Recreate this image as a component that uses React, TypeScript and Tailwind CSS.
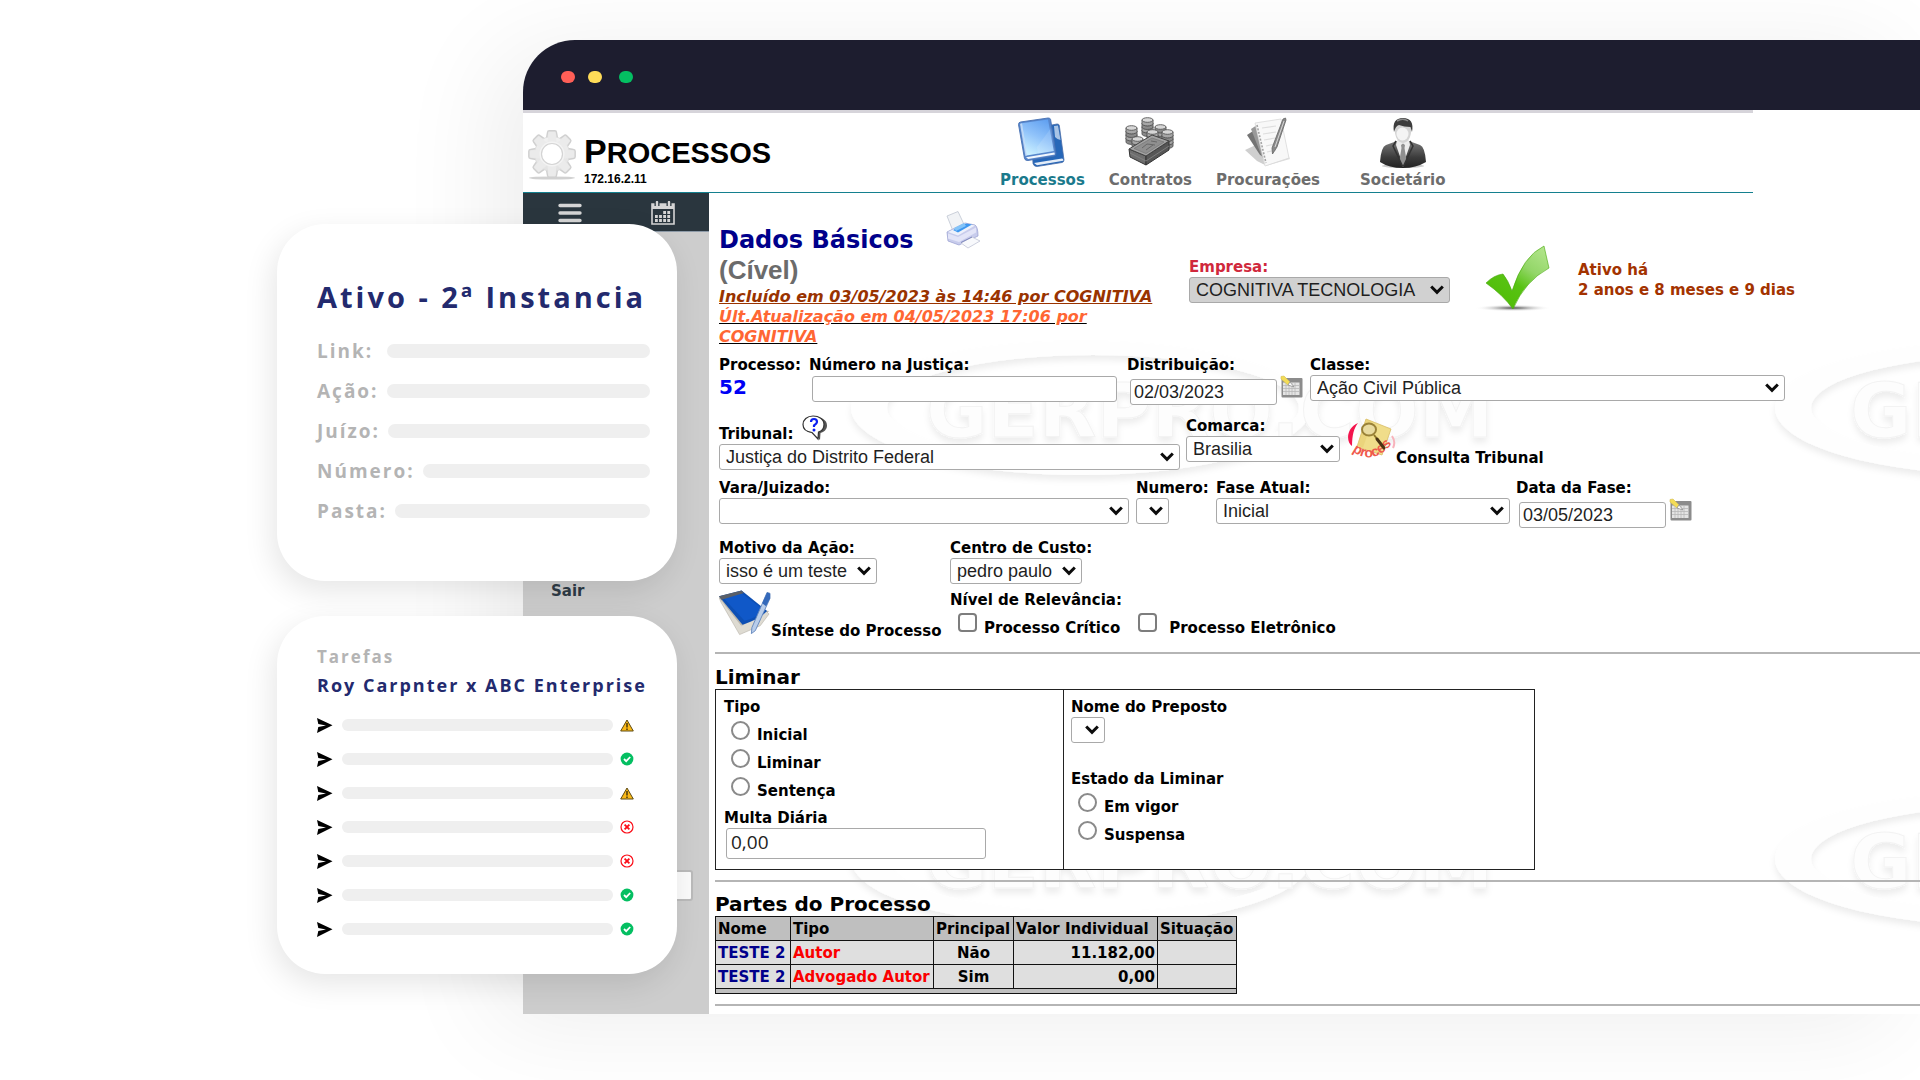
import type { ReactNode } from "react";
import clsx from "clsx";

const LABEL = "text-[15px] leading-5 font-bold whitespace-nowrap";
const FIELD =
  "h-[26px] rounded-[3px] border border-[#a9a9a9] bg-white font-['Liberation_Sans',Arial,sans-serif] text-[18px] leading-6 text-[#1f1f1f]";

const SUMMARY = ["Link:", "Ação:", "Juízo:", "Número:", "Pasta:"];

type Status = "warning" | "done" | "failed";
const TASKS: Status[] = ["warning", "done", "warning", "failed", "failed", "done", "done"];

const PARTIES = [
  { name: "TESTE 2", type: "Autor", main: "Não", value: "11.182,00" },
  { name: "TESTE 2", type: "Advogado Autor", main: "Sim", value: "0,00" },
];

function SelectBox({
  id,
  label,
  value = "",
  width,
  muted = false,
}: {
  id: string;
  label?: string;
  value?: string;
  width: string;
  muted?: boolean;
}) {
  return (
    <div className={clsx("relative", width)}>
      <select
        id={id}
        aria-label={label}
        defaultValue={value}
        className={clsx(FIELD, "block w-full appearance-none pl-[6px]", muted && "bg-[#d1d1d1]!")}
      >
        <option value={value}>{value}</option>
      </select>
      <svg
        className="pointer-events-none absolute top-[8px] right-[6px]"
        width="14"
        height="10"
        viewBox="0 0 14 10"
        fill="none"
        stroke="#0c0c0c"
        strokeWidth="3"
      >
        <path d="M1.200 1.500 7 7.300l5.800-5.800" />
      </svg>
    </div>
  );
}

function Field({ id, label, children, className }: { id: string; label: string; children: ReactNode; className?: string }) {
  return (
    <div className={className}>
      <label htmlFor={id} className={clsx(LABEL, "block")}>
        {label}
      </label>
      {children}
    </div>
  );
}

function DateBox({ id, value }: { id: string; value: string }) {
  return (
    <div className="flex items-start gap-[3px]">
      <input id={id} defaultValue={value} className={clsx(FIELD, "mt-1 ml-[3px] w-[147px] px-[3px]")} />
      <button type="button" aria-label="Abrir calendário">
        <DatePickerIcon />
      </button>
    </div>
  );
}

function Radio({ name, label }: { name: string; label: string }) {
  return (
    <label className={clsx(LABEL, "flex h-[28px] items-start gap-[7px]")}>
      <input
        type="radio"
        name={name}
        className="size-[19px] appearance-none rounded-full border-2 border-[#8a8a8a] bg-white checked:bg-[#1a73e8]"
      />
      <span className="pt-1">{label}</span>
    </label>
  );
}

function Check({ label, className }: { label: string; className: string }) {
  return (
    <label className={clsx(LABEL, "flex items-start", className)}>
      <input
        type="checkbox"
        className="size-[19px] appearance-none rounded-[4px] border-2 border-[#7d7d7d] bg-white checked:bg-[#1a73e8]"
      />
      <span className="pt-[5px]">{label}</span>
    </label>
  );
}

/* ---------- icons ---------- */

function GearIcon() {
  const teeth = [0, 45, 90, 135, 180, 225, 270, 315];
  return (
    <svg width="50" height="50" viewBox="0 0 50 50">
      <defs>
        <linearGradient id="gear" x1="0" y1="0" x2="0" y2="1">
          <stop offset="0" stopColor="#f1f1f1" />
          <stop offset="1" stopColor="#e2e2e2" />
        </linearGradient>
      </defs>
      <ellipse cx="25" cy="48" rx="23" ry="1.600" fill="#bdbdbd" opacity=".7" />
      <g fill="#e6e6e6" stroke="#d0d0d0" strokeWidth="1.400" strokeLinejoin="round">
        {teeth.map((a) => (
          <path key={a} d="M19 11 20.500 2.500Q20.600 .8 22.200 .8H27.800Q29.400 .8 29.500 2.500L31 11Z" transform={`rotate(${a} 25 24)`} />
        ))}
      </g>
      <circle cx="25" cy="24" r="17.500" fill="url(#gear)" stroke="#dadada" strokeWidth=".8" />
      <g fill="#ebebeb">
        {teeth.map((a) => (
          <path key={a} d="M20.500 13 21.500 3Q21.600 2 22.500 2H27.500Q28.400 2 28.500 3L29.500 13Z" transform={`rotate(${a} 25 24)`} />
        ))}
      </g>
      <circle cx="25" cy="24" r="12.500" fill="#f4f4f4" />
      <circle cx="25" cy="24" r="10.500" fill="#fff" stroke="#d4d4d4" strokeWidth="1.200" />
    </svg>
  );
}

function BooksIcon() {
  return (
    <svg width="50" height="50" viewBox="0 0 50 50">
      <defs>
        <linearGradient id="bookFront" x1=".8" y1="0" x2=".35" y2="1">
          <stop offset="0" stopColor="#5f9ff0" />
          <stop offset=".5" stopColor="#8fc2fa" />
          <stop offset="1" stopColor="#c9efff" />
        </linearGradient>
      </defs>
      <path d="M14 12 40 7q2-.2 2.300 1.500L47 43q0 2-2 2.500L20 49.500q-3 .2-4-3Z" fill="#2667b8" stroke="#4a6da8" strokeWidth=".8" />
      <path d="M37 9 41 8.500 43.500 23 40.500 22 38 20Z" fill="#a8c4e6" />
      <path d="M17 46 45 41.500l1 .5.3 1.800L20 48.200Z" fill="#e4edf8" />
      <path d="M1.500 7.500Q1.500 5.300 3.500 5L31 1q2.200-.2 2.600 1.500L39 36.500q.2 2-1.800 2.500L11 43.500Q8 44 7.400 41Z" fill="#5686cc" stroke="#4770b2" strokeWidth=".9" />
      <path d="M9 40.300 37.400 35.500l.5 2L11.200 42Z" fill="#f2f7fd" />
      <path d="M4.500 6.300 31 2.400 36.800 34 9.500 38.600Z" fill="url(#bookFront)" />
      <path d="M20 30 34 11 36.800 34 21 36.700Z" fill="#fff" opacity=".12" />
      <path d="M3 6.800 5 6.300l5 32.200-1.600.5Z" fill="#d5e9ff" opacity=".8" />
    </svg>
  );
}

function Coins({ x, y, n }: { x: number; y: number; n: number }) {
  return (
    <g stroke="#565656" strokeWidth=".9">
      {Array.from({ length: n }, (_, i) => (
        <g key={i}>
          <path d={`M${x} ${y + (n - 1 - i) * 3.5}v3.500a5.500 2.400 0 0 0 11 0v-3.500Z`} fill={i % 2 ? "#a6a6a6" : "#8a8a8a"} />
          <ellipse cx={x + 5.5} cy={y + (n - 1 - i) * 3.5} rx="5.500" ry="2.300" fill="#d6d6d6" />
        </g>
      ))}
    </g>
  );
}

function MoneyIcon() {
  return (
    <svg width="50" height="50" viewBox="0 0 50 50">
      <Coins x={17} y={3} n={4} />
      <Coins x={30} y={10} n={3} />
      <Coins x={1} y={11} n={4} />
      <Coins x={22} y={15} n={2} />
      <Coins x={37} y={15} n={4} />
      <Coins x={7} y={22} n={2} />
      <path d="M4 32 21 39 21 48 5 40Z" fill="#6d6d6d" stroke="#333" />
      <path d="M21 39 44 24V33L21 48Z" fill="#565656" stroke="#333" />
      <path d="M4 32 27 18 44 24 21 39Z" fill="#a2a2a2" stroke="#444" strokeLinejoin="round" />
      <path d="M9 31.500 27 21 39 25 21 36.500Z" fill="#8f8f8f" stroke="#757575" strokeWidth=".7" />
      <path d="m17 31 5-4m-1 6 7-5m-6-1 8 1m-4-4 6 1" stroke="#636363" fill="none" strokeWidth=".9" />
      <path d="m5 36 16 8 23-15" stroke="#858585" fill="none" strokeWidth=".8" />
    </svg>
  );
}

function PapersIcon() {
  return (
    <svg width="50" height="50" viewBox="0 0 50 50">
      <path d="M2 33 17 26 24 49 14 44Z" fill="#cfcfcf" />
      <path d="M30 30 42 32 47 42 23 49Z" fill="#dcdcdc" />
      <path d="M4 18 13 12 21 40 17 38Z" fill="#747474" />
      <path d="M8 12 14 8 24 44 19 40Z" fill="#9a9a9a" />
      <path d="M12 6 38 2 46 41 22 49Z" fill="#f8f8f8" stroke="#d9d9d9" strokeWidth=".8" />
      <path d="M19 11 33 9M20 17l13-2M21 23l11-2M23 29l9-2M24 35l9-2" stroke="#dedede" strokeWidth="1.200" />
      <path d="m14 8 9 38" stroke="#a5a5a5" strokeWidth="1.600" strokeDasharray="2 1.500" />
      <path d="m40 2 2.500-1 .5 2-9 27-4.500 7-.5-6Z" fill="#8a8a8a" stroke="#666" strokeWidth=".8" />
      <path d="m41 4-9 26" stroke="#d8d8d8" strokeWidth="1" />
    </svg>
  );
}

function BusinessmanIcon() {
  return (
    <svg width="50" height="52" viewBox="0 0 50 52">
      <defs>
        <linearGradient id="suit" x1="0" y1="0" x2="0" y2="1">
          <stop offset="0" stopColor="#7a7a7a" />
          <stop offset=".6" stopColor="#3c3c3c" />
          <stop offset="1" stopColor="#222" />
        </linearGradient>
      </defs>
      <ellipse cx="25" cy="49" rx="21" ry="2" fill="#aaa" opacity=".6" />
      <path d="M2 45Q3 30 8 28L19 24 25 28 31 24 42 28Q47 30 48 45 38 51 25 51 11 51 2 45Z" fill="url(#suit)" />
      <path d="M19 23h12l1 5-7 20-7-20Z" fill="#ececec" />
      <path d="m23 28 2-1.500 2 1.500-.5 3 2 12-3.500 7-3.500-7 2-12Z" fill="#8f8f8f" />
      <path d="m18 24-3 5 9.500 20M32 24l3 5-9.500 20" fill="none" stroke="#333" strokeWidth="1.500" />
      <path d="M16.500 11Q17 25 25 26 33 25 33.500 11 30 6 25 6T16.500 11Z" fill="#d4d4d4" />
      <ellipse cx="24.500" cy="17" rx="6" ry="6.500" fill="#f4f4f4" />
      <path d="M16 15Q13.500 1 25 1T34 15L32.500 10Q26 10 21 8 17.500 9 16 15Z" fill="#3d3d3d" />
      <path d="M19 4q6-3.500 11 0" stroke="#8a8a8a" fill="none" strokeWidth="1.500" />
    </svg>
  );
}

function PrinterIcon() {
  return (
    <svg width="36" height="38" viewBox="0 0 36 38">
      <path d="m2 5 11-4.500 7 15L8 20Z" fill="#f1f3f6" stroke="#bfc5d2" strokeWidth=".8" />
      <path d="M2 21 20 12 30 14q3 2 3 11L14 34 3 30Z" fill="#c8ccec" stroke="#9ea5d3" strokeWidth=".8" />
      <path d="m3 21 17-8.500 10 2L13 24.500Z" fill="#eef1fb" />
      <path d="m8 19 13-6.500 6 1L13 21.500Z" fill="#3f97ef" />
      <path d="m9 17 10-5 2 3-10 5Z" fill="#83c4f9" />
      <path d="M3 22.500 13 26l18-9.500v5L14 31 3 27.500Z" fill="#e3e5f8" />
      <path d="m16 32 11-6 8 4-12 7Z" fill="#f8f9fc" stroke="#c0c4d6" strokeWidth=".8" />
      <path d="M16 31.500 27 26" stroke="#7d86bd" />
    </svg>
  );
}

function BigCheckIcon() {
  return (
    <svg width="84" height="68" viewBox="0 0 84 68">
      <defs>
        <linearGradient id="tick" x1=".9" y1="0" x2=".2" y2="1">
          <stop offset="0" stopColor="#b3e58c" />
          <stop offset=".35" stopColor="#93d668" />
          <stop offset=".6" stopColor="#58c313" />
          <stop offset="1" stopColor="#4fbb06" />
        </linearGradient>
        <radialGradient id="tickShade">
          <stop offset="0" stopColor="#555" />
          <stop offset=".4" stopColor="#bbb" />
          <stop offset="1" stopColor="#fff" stopOpacity="0" />
        </radialGradient>
      </defs>
      <ellipse cx="39" cy="63" rx="38" ry="3.500" fill="url(#tickShade)" />
      <path d="M12 38Q20 30 29 29 34 35 38 46 49 11 70 1L75 23Q51 36 39 64 29 50 12 38Z" fill="url(#tick)" stroke="#47a80b" strokeWidth=".6" />
    </svg>
  );
}

function HelpIcon() {
  return (
    <svg width="26" height="26" viewBox="0 0 26 26">
      <path d="M11 2C5 2 2 6 2 10.500 2 16 7 18 11 18.500L17 25 17.500 18C21 17 24 14.500 24 10.500 24 5 19 2 11 2Z" fill="#555" transform="translate(1 0)" />
      <path d="M11 1C5 1 1 5 1 9.500 1 15 6 17 10 17.500L16 24 16.500 17C20 16 22 13.500 22 9.500 22 4 17 1 11 1Z" fill="#fff" stroke="#333" strokeWidth="1.200" />
      <path d="M9 7Q9 4 12 4T15 7Q15 8.500 12 10.500V12" fill="none" stroke="#0b1ff0" strokeWidth="2.200" />
      <circle cx="12" cy="15" r="1.500" fill="#0b1ff0" />
    </svg>
  );
}

function DatePickerIcon() {
  return (
    <svg width="24" height="24" viewBox="0 0 24 24">
      <rect x="1.500" y="3" width="21" height="19.500" rx="1" fill="#8c8c8c" />
      <rect x="3" y="7.500" width="16.500" height="12.500" fill="#e4e4e4" />
      <path d="M3 10.500h16.500M3 13.500h16.500M3 16.500h16.500M6 7.500V20M9 7.500V20M12 7.500V20M15 7.500V20" stroke="#b8b8b8" strokeWidth=".8" />
      <path d="M1 1.500 4 1 10 7 8 10 1 4Z" fill="#f3dc57" stroke="#d4bd55" strokeWidth=".6" />
      <path d="m8 10 2-3 4 5Z" fill="#fff" stroke="#888" strokeWidth=".7" />
    </svg>
  );
}

function CourtSearchIcon() {
  return (
    <svg width="49" height="44" viewBox="0 0 49 44">
      <defs>
        <path id="processArc" d="M5 33Q27 50 48 22" />
      </defs>
      <path d="M11 5C-1 10-1 24 5 28 5 17 7 10 11 5Z" fill="#f3144d" />
      <path d="M45 18Q49 24 46 30" fill="none" stroke="#f8b3bb" strokeWidth="2" />
      <path d="m19 1 25 10-9 26-25-8Z" fill="#f0dd8a" stroke="#d8bd64" strokeWidth=".8" />
      <path d="m19 1 6 2.500-9 26-6-2Z" fill="#e6cb6d" opacity=".5" />
      <text fontFamily="Liberation Sans, Arial, sans-serif" fontSize="14" fontWeight="700" fill="#ef5a4c">
        <textPath href="#processArc">proces</textPath>
      </text>
      <ellipse cx="22" cy="11.500" rx="7" ry="6" fill="#e9dba0" stroke="#9a8238" strokeWidth="2" />
      <path d="m27 17 4 5" stroke="#8d7427" strokeWidth="2" />
      <path d="m30 21 7 9" stroke="#4a3414" strokeWidth="3" strokeLinecap="round" />
    </svg>
  );
}

function NotebookIcon() {
  return (
    <svg width="52" height="46" viewBox="0 0 53 46">
      <path d="M0 7 21 36 42 30 51 21 27 18Z" fill="#b9b5ac" />
      <path d="M0 7 2 12 21 45 42 36 51 24 48 21 23 36Z" fill="#dedbd2" stroke="#b5b1a6" strokeWidth=".6" />
      <path d="M0 6 23 0 49 21Q40 30 24 35Z" fill="#0d4fb4" />
      <path d="M4 7 22 2 46 20Q38 28 26 31Z" fill="#1058c8" />
      <path d="M0 6 23 0 25.500 2.500 2.500 9.500Z" fill="#5a5f68" />
      <path d="m49 2 3 1v5L37 41l-4 3 .5-6Z" fill="#b8cdea" stroke="#5f83bb" strokeWidth=".9" />
      <path d="m49 2 3 1v5l-4 8-4-3Z" fill="#3469ba" />
    </svg>
  );
}

function MenuIcon() {
  return (
    <svg width="24" height="20" viewBox="0 0 24 20" stroke="#d5d5d5" strokeWidth="3.400" strokeLinecap="round">
      <path d="M2 2.500h20M2 10h20M2 17.500h20" />
    </svg>
  );
}

function CalendarIcon() {
  return (
    <svg width="24" height="24" viewBox="0 0 24 24">
      <path d="M1 3h22v20H1Z" fill="none" stroke="#d5d5d5" strokeWidth="1.600" />
      <path d="M1 3h22v5H1Z" fill="#d5d5d5" />
      <path d="M6 1v4M18 1v4" stroke="#2a363e" strokeWidth="5" />
      <path d="M6 1v4M18 1v4" stroke="#d5d5d5" strokeWidth="2.400" strokeLinecap="round" />
      <path d="M12.200 11.500h7.500M4 15.500h16M4 19.500h16" stroke="#d5d5d5" strokeWidth="2.800" strokeDasharray="2.800 1.300" />
    </svg>
  );
}

function ArrowIcon() {
  return (
    <svg width="16" height="15" viewBox="0 0 16 15">
      <path d="M0 0 15.500 7.300 0 15 1.300 9 9 7.400 1.300 6Z" />
    </svg>
  );
}

function StatusIcon({ status }: { status: Status }) {
  if (status === "warning") {
    return (
      <svg width="14" height="13" viewBox="0 0 14 13">
        <path d="M7 1 13.300 12H.7Z" fill="#fbb917" stroke="#5d4a12" strokeWidth="1" strokeLinejoin="round" />
        <path d="M7 4v4.600M7 9.600V11" stroke="#3c2f0a" strokeWidth="1.400" />
      </svg>
    );
  }
  if (status === "done") {
    return (
      <svg width="14" height="14" viewBox="0 0 14 14">
        <circle cx="7" cy="7" r="6.400" fill="#04bf62" />
        <path d="m4 7 2.200 2.200L10.200 5" fill="none" stroke="#fff" strokeWidth="1.800" />
      </svg>
    );
  }
  return (
    <svg width="14" height="14" viewBox="0 0 14 14" fill="none" stroke="#fb0d18">
      <circle cx="7" cy="7" r="6" strokeWidth="1.200" />
      <path d="m4.600 4.600 4.800 4.800m0-4.800L4.600 9.400" strokeWidth="1.800" />
    </svg>
  );
}

/* embossed logo tiled behind the form */
function Watermark() {
  const tiles = [
    [0, 0],
    [924, 0],
    [0, 451],
    [924, 451],
  ];
  return (
    <svg className="pointer-events-none absolute inset-0 size-full" aria-hidden="true">
      <defs>
        <filter id="emboss" x="-10%" y="-20%" width="120%" height="150%">
          <feDropShadow dx="0" dy="5" stdDeviation="3" floodColor="#000" floodOpacity=".07" />
        </filter>
      </defs>
      {tiles.map(([x, y]) => (
        <g key={`${x}-${y}`} transform={`translate(${x} ${y})`} filter="url(#emboss)">
          <path
            fillRule="evenodd"
            fill="#fefefe"
            d="M142 215a230 67 0 1 0 460 0a230 67 0 1 0-460 0ZM178 215a206 53 0 1 0 412 0a206 53 0 1 0-412 0Z"
          />
          <text x="217" y="244" fontFamily="DejaVu Sans, sans-serif" fontWeight="700" fontSize="75" fill="#fdfdfd" stroke="#f3f3f3">
            GERPRO.COM
          </text>
        </g>
      ))}
    </svg>
  );
}

/* ---------- sections ---------- */

function Toolbar() {
  const tab = "flex flex-col items-center text-[15px] leading-5 font-bold text-[#6d6d6d]";
  return (
    <header className="flex h-[83px] max-w-[1230px] border-t-[3px] border-b border-t-[#d6d4da] border-b-[#14808f]">
      <div className="flex w-[477px] shrink-0 gap-[7px] pl-1 font-['Liberation_Sans',Arial,sans-serif] font-bold text-black">
        <div className="pt-[17px]">
          <GearIcon />
        </div>
        <div className="pt-5">
          <h1 className="text-[29px] leading-9 uppercase first-letter:text-[34px]">Processos</h1>
          <p className="text-[12px] leading-4">172.16.2.11</p>
        </div>
      </div>
      <nav className="flex items-start gap-6 pt-1">
        <a href="#processos" className={clsx(tab, "text-[#1b7a8c]!")}>
          <span className="h-[53px]">
            <BooksIcon />
          </span>
          Processos
        </a>
        <a href="#contratos" className={tab}>
          <span className="h-[53px]">
            <MoneyIcon />
          </span>
          Contratos
        </a>
        <a href="#procuracoes" className={tab}>
          <span className="h-[53px]">
            <PapersIcon />
          </span>
          Procurações
        </a>
        <a href="#societario" className={clsx(tab, "ml-4")}>
          <span className="h-[53px]">
            <BusinessmanIcon />
          </span>
          Societário
        </a>
      </nav>
    </header>
  );
}

function Sidebar() {
  return (
    <aside className="w-[186px] shrink-0 bg-[#cdcdcd]">
      <div className="flex h-[39px] justify-between border-b border-[#8e9ba8] bg-[#2a363e] pt-2 pr-[34px] pl-[35px]">
        <button type="button" aria-label="Menu" className="flex items-start pt-0.5">
          <MenuIcon />
        </button>
        <button type="button" aria-label="Agenda" className="flex items-start">
          <CalendarIcon />
        </button>
      </div>
      <a href="#sair" className={clsx(LABEL, "mt-[349px] ml-7 block text-[#2e3b46]")}>
        Sair
      </a>
      <input
        aria-label="Pesquisar"
        className="mt-[269px] mr-4 ml-auto block h-[31px] w-[150px] rounded-[3px] border-2 border-[#bababa] bg-[#fbfbfb]"
      />
    </aside>
  );
}

function RecordHeader() {
  return (
    <div className="flex pl-1">
      <div className="w-[470px]">
        <div className="flex gap-8">
          <div>
            <h2 className="pt-[14px] text-[24px] leading-[30px] font-bold text-[#00008b]">Dados Básicos</h2>
            <p className="font-['Liberation_Sans',Arial,sans-serif] text-[26px] leading-[30px] font-bold text-[#6b6b6b]">(Cível)</p>
          </div>
          <button type="button" aria-label="Imprimir" className="self-start">
            <PrinterIcon />
          </button>
        </div>
        <p className="mt-0.5 text-[16px] leading-5 font-bold whitespace-nowrap text-[#993300] italic underline">
          Incluído em 03/05/2023 às 14:46 por COGNITIVA
        </p>
        <p className="w-[400px] text-[16px] leading-5 font-bold text-[#ff6633] italic underline decoration-black">
          Últ.Atualização em 04/05/2023 17:06 por COGNITIVA
        </p>
      </div>
      <div className="pt-[46px]">
        <label htmlFor="empresa" className={clsx(LABEL, "block text-[#d0283c]")}>
          Empresa:
        </label>
        <SelectBox id="empresa" value="COGNITIVA TECNOLOGIA" width="w-[261px]" muted />
      </div>
      <div className="pt-[34px] pl-6">
        <BigCheckIcon />
      </div>
      <p className="pt-[49px] pl-5 text-[15px] leading-5 font-bold whitespace-nowrap text-[#a33300]">
        Ativo há
        <br />2 anos e 8 meses e 9 dias
      </p>
    </div>
  );
}

function CaseForm() {
  return (
    <form className="pl-1">
      <div className="flex">
        <div className="w-[90px]">
          <p className={LABEL}>Processo:</p>
          <p className="text-[20px] leading-6 font-bold text-[#0000f5]">52</p>
        </div>
        <Field id="numero-justica" label="Número na Justiça:" className="w-[318px]">
          <input id="numero-justica" className={clsx(FIELD, "mt-px ml-[3px] block w-[305px] px-1")} />
        </Field>
        <Field id="distribuicao" label="Distribuição:" className="w-[183px]">
          <DateBox id="distribuicao" value="02/03/2023" />
        </Field>
        <Field id="classe" label="Classe:">
          <SelectBox id="classe" value="Ação Civil Pública" width="w-[475px]" />
        </Field>
      </div>

      <div className="mt-[11px] flex">
        <div className="w-[467px]">
          <div className="flex h-7 items-end gap-[9px]">
            <label htmlFor="tribunal" className={LABEL}>
              Tribunal:
            </label>
            <button type="button" aria-label="Ajuda" className="mb-[3px]">
              <HelpIcon />
            </button>
          </div>
          <SelectBox id="tribunal" value="Justiça do Distrito Federal" width="w-[461px]" />
        </div>
        <Field id="comarca" label="Comarca:">
          <SelectBox id="comarca" value="Brasilia" width="w-[154px]" />
        </Field>
        <button type="button" className={clsx(LABEL, "ml-[7px] flex items-start")}>
          <span className="pt-0.5">
            <CourtSearchIcon />
          </span>
          <span className="pt-8">Consulta Tribunal</span>
        </button>
      </div>

      <div className="mt-2 flex">
        <Field id="vara" label="Vara/Juizado:" className="w-[417px]">
          <SelectBox id="vara" width="w-[410px]" />
        </Field>
        <Field id="numero" label="Numero:" className="w-[80px]">
          <SelectBox id="numero" width="w-[33px]" />
        </Field>
        <Field id="fase" label="Fase Atual:" className="w-[300px]">
          <SelectBox id="fase" value="Inicial" width="w-[294px]" />
        </Field>
        <Field id="data-fase" label="Data da Fase:">
          <DateBox id="data-fase" value="03/05/2023" />
        </Field>
      </div>

      <div className="mt-[10px] flex">
        <Field id="motivo" label="Motivo da Ação:" className="w-[231px]">
          <SelectBox id="motivo" value="isso é um teste" width="w-[158px]" />
        </Field>
        <Field id="centro" label="Centro de Custo:">
          <SelectBox id="centro" value="pedro paulo" width="w-[132px]" />
        </Field>
      </div>

      <div className="mt-[6px] flex">
        <button type="button" className={clsx(LABEL, "flex w-[231px] items-start text-left")}>
          <NotebookIcon />
          <span className="pt-[31px]">Síntese do Processo</span>
        </button>
        <fieldset>
          <legend className={LABEL}>Nível de Relevância:</legend>
          <div className="mt-[3px] flex gap-[18px] pl-2">
            <Check label="Processo Crítico" className="gap-[7px]" />
            <Check label="Processo Eletrônico" className="gap-3" />
          </div>
        </fieldset>
      </div>
    </form>
  );
}

function Liminar() {
  return (
    <section>
      <h2 className="pt-[11px] text-[20px] leading-6 font-bold">Liminar</h2>
      <div className="grid w-[820px] grid-cols-[348px_1fr] border border-[#222] bg-white">
        <div className="h-[179px] border-r border-[#222] px-2 pt-[7px]">
          <fieldset>
            <legend className={clsx(LABEL, "mb-1")}>Tipo</legend>
            <div className="pl-[7px]">
              <Radio name="tipo" label="Inicial" />
              <Radio name="tipo" label="Liminar" />
              <Radio name="tipo" label="Sentença" />
            </div>
          </fieldset>
          <label htmlFor="multa" className={clsx(LABEL, "mt-[3px] block")}>
            Multa Diária
          </label>
          <input
            id="multa"
            defaultValue="0,00"
            className="ml-0.5 block h-[31px] w-[260px] rounded-[3px] border border-[#a9a9a9] px-1 pb-1 font-['Open_Sans','Noto_Sans',sans-serif] text-[19px] leading-6 text-[#222]"
          />
        </div>
        <div className="px-[7px] pt-[7px]">
          <label htmlFor="preposto" className={clsx(LABEL, "block")}>
            Nome do Preposto
          </label>
          <SelectBox id="preposto" width="w-[34px]" />
          <fieldset className="mt-[26px]">
            <legend className={clsx(LABEL, "mb-1")}>Estado da Liminar</legend>
            <div className="pl-[7px]">
              <Radio name="estado" label="Em vigor" />
              <Radio name="estado" label="Suspensa" />
            </div>
          </fieldset>
        </div>
      </div>
    </section>
  );
}

function Parties() {
  const cell = "border border-[#111] px-0.5 leading-5";
  return (
    <section>
      <h2 className="pt-[10px] text-[20px] leading-6 font-bold">Partes do Processo</h2>
      <table className="w-[521px] table-fixed border-collapse bg-[#dfdfdf] text-[15px] font-bold whitespace-nowrap">
        <colgroup>
          <col className="w-[75px]" />
          <col className="w-[143px]" />
          <col className="w-[80px]" />
          <col className="w-[144px]" />
          <col className="w-[79px]" />
        </colgroup>
        <thead>
          <tr className="h-6 bg-[#bfbfbf] text-left">
            <th className={cell}>Nome</th>
            <th className={cell}>Tipo</th>
            <th className={cell}>Principal</th>
            <th className={cell}>Valor Individual</th>
            <th className={cell}>Situação</th>
          </tr>
        </thead>
        <tbody>
          {PARTIES.map((p) => (
            <tr key={p.type} className="h-6">
              <td className={clsx(cell, "text-[#00008b]")}>{p.name}</td>
              <td className={clsx(cell, "text-[#fb0000]")}>{p.type}</td>
              <td className={clsx(cell, "text-center")}>{p.main}</td>
              <td className={clsx(cell, "text-right")}>{p.value}</td>
              <td className={cell} />
            </tr>
          ))}
          <tr className="h-[5px] bg-[#bfbfbf]">
            <td colSpan={5} className="border border-[#111] p-0" />
          </tr>
        </tbody>
      </table>
    </section>
  );
}

function SummaryCard() {
  return (
    <section className="rounded-[48px] bg-white pt-[53px] pr-[27px] pb-[50px] pl-10 shadow-[-4px_10px_30px_rgba(0,0,0,0.1)]">
      <h2 className="text-[29px] leading-10 font-bold tracking-[3px] whitespace-nowrap text-[#232a6e]">Ativo - 2ª Instancia</h2>
      <dl className="mt-[14px]">
        {SUMMARY.map((label) => (
          <div key={label} className="flex h-10 items-center gap-2">
            <dt className="min-w-[62px] text-[19px] leading-6 font-bold tracking-[2px] text-[#b4b4b4]">{label}</dt>
            <dd className="h-[14px] flex-1 rounded-full bg-[#efefef]" />
          </div>
        ))}
      </dl>
    </section>
  );
}

function TasksCard() {
  return (
    <section className="rounded-[48px] bg-white pt-[29px] pr-8 pb-7 pl-10 shadow-[-4px_10px_30px_rgba(0,0,0,0.1)]">
      <p className="text-[17px] leading-6 font-bold tracking-[2px] text-[#b4b4b4]">Tarefas</p>
      <h2 className="text-[18px] leading-8 font-bold tracking-[2px] whitespace-nowrap text-[#232a6e]">
        Roy Carpnter x ABC Enterprise
      </h2>
      <ul className="mt-[7px] pr-[11px]">
        {TASKS.map((status, i) => (
          <li key={i} className="flex h-[34px] items-center">
            <ArrowIcon />
            <span className="mr-[7px] ml-[9px] h-3 flex-1 rounded-full bg-[#efefef]" />
            <StatusIcon status={status} />
          </li>
        ))}
      </ul>
    </section>
  );
}

export default function App() {
  return (
    <div className="relative min-h-screen overflow-hidden bg-white pt-10 pl-[523px] font-['DejaVu_Sans',Verdana,sans-serif] text-black">
      <div className="rounded-tl-[52px] bg-white shadow-[-30px_10px_100px_rgba(0,0,0,0.07)]">
        <div className="flex h-[70px] items-center gap-[13px] rounded-tl-[52px] bg-[#1d1d2f] pt-1 pl-[38px]">
          <span className="h-3 w-[14px] rounded-full bg-[#ff5f57]" />
          <span className="h-3 w-[14px] rounded-full bg-[#ffdc58]" />
          <span className="ml-1 h-3 w-[14px] rounded-full bg-[#04bf62]" />
        </div>
        <Toolbar />
        <div className="flex">
          <Sidebar />
          <main className="relative min-w-0 flex-1 bg-white pt-[18px] pl-[6px]">
            <Watermark />
            <div className="relative">
              <RecordHeader />
              <div className="pt-2">
                <CaseForm />
              </div>
              <hr className="mt-[11px] border-t-2 border-[#b5b5b5]" />
              <Liminar />
              <hr className="mt-[10px] border-t-2 border-[#b5b5b5]" />
              <Parties />
              <hr className="mt-[10px] mb-2 border-t-2 border-[#b5b5b5]" />
            </div>
          </main>
        </div>
      </div>

      {/* floating cards over the window */}
      <div className="absolute top-[224px] left-[277px] flex w-[400px] flex-col gap-[35px] font-['Open_Sans','Noto_Sans',sans-serif]">
        <SummaryCard />
        <TasksCard />
      </div>
    </div>
  );
}
